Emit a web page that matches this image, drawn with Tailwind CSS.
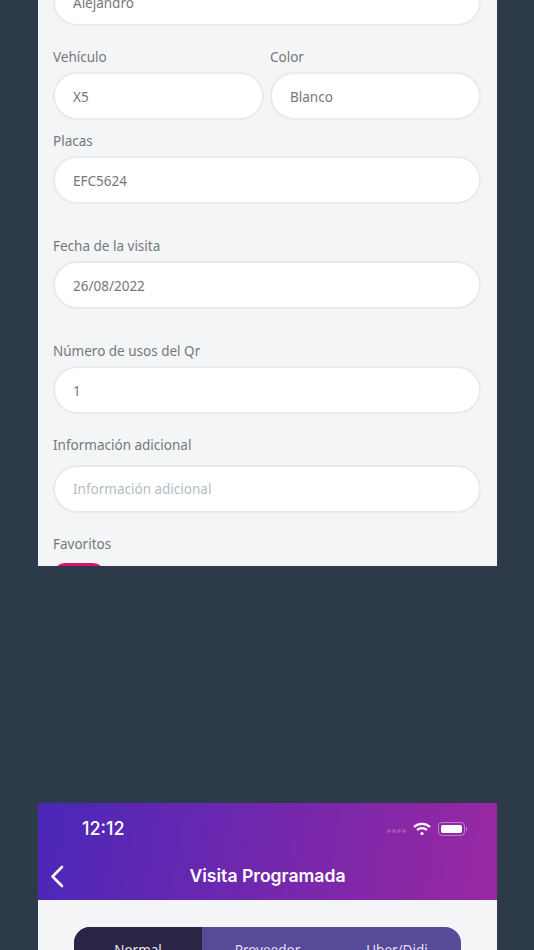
<!DOCTYPE html>
<html lang="en">
<head>
  <meta charset="UTF-8">
  <meta name="viewport" content="width=device-width, initial-scale=1.0">
  <title>Visita Programada</title>
  <script src="https://cdn.jsdelivr.net/npm/@tailwindcss/browser@4"></script>
</head>
<body class="bg-[#2d3a4a] font-['Noto_Sans','Open_Sans',sans-serif] h-[950px] overflow-hidden">
  <!-- Form screenshot -->
  <div class="ml-[38px] w-[459px] h-[566px] bg-[#f4f5f7] overflow-hidden pl-[15px] pr-[16px]">
    <div class="-mt-[22px] h-[48px] rounded-[24px] bg-white border-2 border-[#e9eaec] flex items-center px-[18px] pt-[2px] text-[13.5px] text-[#74787d]">Alejandro</div>

    <div class="flex gap-[6px] mt-[18px]">
      <div class="w-[211px]">
        <div class="h-[28px] flex items-center pb-[1px] text-[13.5px] text-[#74787d]">Vehículo</div>
        <div class="h-[48px] rounded-[24px] bg-white border-2 border-[#e9eaec] flex items-center px-[18px] pt-[2px] text-[13.5px] text-[#74787d]">X5</div>
      </div>
      <div class="w-[211px]">
        <div class="h-[28px] flex items-center pb-[1px] text-[13.5px] text-[#74787d]">Color</div>
        <div class="h-[48px] rounded-[24px] bg-white border-2 border-[#e9eaec] flex items-center px-[18px] pt-[2px] text-[13.5px] text-[#74787d]">Blanco</div>
      </div>
    </div>

    <div class="h-[36px] flex items-end pb-[5px] text-[13.5px] text-[#74787d]">Placas</div>
    <div class="h-[48px] rounded-[24px] bg-white border-2 border-[#e9eaec] flex items-center px-[18px] pt-[2px] text-[13.5px] text-[#74787d]">EFC5624</div>

    <div class="h-[57px] flex items-end pb-[5px] text-[13.5px] text-[#74787d]">Fecha de la visita</div>
    <div class="h-[48px] rounded-[24px] bg-white border-2 border-[#e9eaec] flex items-center px-[18px] pt-[2px] text-[13.5px] text-[#74787d]">26/08/2022</div>

    <div class="h-[57px] flex items-end pb-[5px] text-[13.5px] text-[#74787d]">Número de usos del Qr</div>
    <div class="h-[48px] rounded-[24px] bg-white border-2 border-[#e9eaec] flex items-center px-[18px] pt-[2px] text-[13.5px] text-[#74787d]">1</div>

    <div class="h-[51px] flex items-center pt-[11px] text-[13.5px] text-[#74787d]">Información adicional</div>
    <div class="h-[48px] rounded-[24px] bg-white border-2 border-[#e9eaec] flex items-center px-[18px] text-[13.5px] text-[#b3bcc6]">Información adicional</div>

    <div class="h-[50px] flex items-end pb-[9px] text-[13.5px] text-[#74787d]">Favoritos</div>
    <div class="w-[52px] h-[24px] rounded-full bg-[#d6146f]"></div>
  </div>

  <!-- Header screenshot -->
  <div class="ml-[38px] mt-[237px] w-[459px] h-[147px] bg-[#f4f5f7] overflow-hidden">
    <div class="h-[97px] bg-[linear-gradient(100deg,#4a27b8,#9a28a2)] text-white">
      <div class="h-[50px] flex items-center justify-between pl-[44px] pr-[30px] mb-[2px]">
        <span class="text-[18px] font-medium font-['Inter',sans-serif]">12:12</span>
        <div class="flex items-center gap-[7px] mt-[1px]">
          <div class="flex gap-[1px] mt-[5px]">
            <span class="w-[4px] h-[4px] rounded-full bg-white/20"></span>
            <span class="w-[4px] h-[4px] rounded-full bg-white/20"></span>
            <span class="w-[4px] h-[4px] rounded-full bg-white/20"></span>
            <span class="w-[4px] h-[4px] rounded-full bg-white/20"></span>
          </div>
          <svg width="18" height="14" viewBox="0 0 18 14" fill="none" stroke="white" stroke-width="2.2">
            <path d="M1 5 C5.5 0.8 12.5 0.8 17 5"/>
            <path d="M4 8 C6.8 5.6 11.2 5.6 14 8"/>
            <circle cx="9" cy="11.5" r="1.6" fill="white" stroke="none"/>
          </svg>
          <div class="flex items-center gap-[1px]">
            <div class="w-[27px] h-[14px] rounded-[4px] border border-white/40 p-[2px]">
              <div class="w-full h-full rounded-[2px] bg-white"></div>
            </div>
            <span class="w-[1px] h-[4px] bg-white/40"></span>
          </div>
        </div>
      </div>
      <div class="relative h-[45px] flex items-center justify-center pb-[2px]">
        <svg class="absolute left-[12px] top-[10px]" width="14" height="23" viewBox="0 0 14 23" fill="none" stroke="white" stroke-width="2.6" stroke-linecap="round" stroke-linejoin="round">
          <path d="M12 2 L2.5 11.5 L12 21"/>
        </svg>
        <span class="text-[17.6px] font-semibold font-['Inter',sans-serif]">Visita Programada</span>
      </div>
    </div>
    <div class="mx-[36px] mt-[27px] h-[40px] rounded-t-[16px] bg-[#564a99] overflow-hidden flex text-[13.5px] text-[#e3def2] font-normal">
      <div class="w-[128px] bg-[#2b2545] text-[#e6e4ee] flex justify-center pt-[13px]">Normal</div>
      <div class="w-[131px] flex justify-center pt-[13px]">Proveedor</div>
      <div class="w-[128px] flex justify-center pt-[13px]">Uber/Didi</div>
    </div>
  </div>
</body>
</html>
